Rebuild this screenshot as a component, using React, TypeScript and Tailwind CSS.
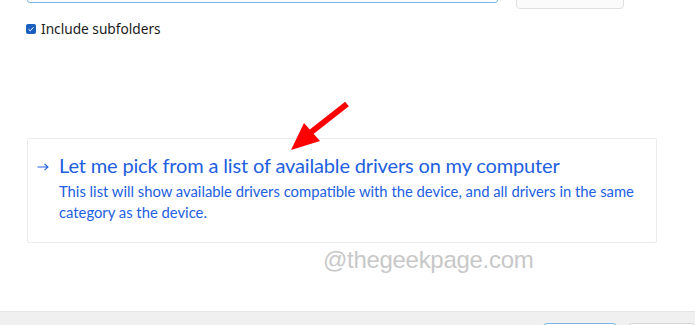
import React from "react";

export default function App() {
  const blue = "text-[#2160e0]";
  return (
    <div className="w-[695px] h-[325px] overflow-hidden bg-white flex flex-col relative font-['Noto_Sans',sans-serif]">
      {/* top row: search input and browse button, mostly scrolled off */}
      <div className="flex items-start pl-[27px] -mt-[30px]">
        <div className="w-[471px] h-[33px] border border-[#7ab5e8] rounded-[3px] bg-white" />
        <div className="ml-[18px] w-[108px] h-[39px] border border-[#e0e0e0] rounded-[4px] bg-[#fbfbfb]" />
      </div>

      {/* checkbox */}
      <label className="flex items-center gap-[5px] pl-[26px] mt-[14px] h-[12px]">
        <span className="w-[10px] h-[10px] rounded-[2px] bg-[#1a5fc0] flex items-center justify-center">
          <svg width="8" height="8" viewBox="0 0 8 8">
            <path d="M1.5 4.2 L3.2 5.8 L6.5 2.2" stroke="white" strokeWidth="1" fill="none" />
          </svg>
        </span>
        <span className="text-[13.7px] text-[#1b1b1b] leading-none">Include subfolders</span>
      </label>

      {/* card */}
      <div className="ml-[27px] mt-[103px] w-[630px] h-[105px] border border-[#ebebeb] rounded-[2px] bg-white flex font-['Lato',sans-serif]">
        <div className="pl-[9px] pt-[24px] w-[31px]">
          <svg width="12" height="8" viewBox="0 0 12 8">
            <path d="M0.5 4 H11 M7.5 0.8 L11 4 L7.5 7.2" stroke="#2160e0" strokeWidth="1.1" fill="none" />
          </svg>
        </div>
        <div className="flex flex-col">
          <div className={`mt-[13px] text-[20px] leading-[26px] tracking-[-0.15px] ${blue}`}>
            Let me pick from a list of available drivers on my computer
          </div>
          <div className={`mt-[3px] w-[590px] text-[14.8px] leading-[21px] ${blue}`}>
            This list will show available drivers compatible with the device, and all drivers in the same
            category as the device.
          </div>
        </div>
      </div>

      {/* watermark */}
      <div className="ml-[323px] mt-[3px] text-[24px] leading-[28px] text-[#c8c8c8] font-['Liberation_Sans',Arial,sans-serif] tracking-[-0.3px]">
        @thegeekpage.com
      </div>

      {/* footer */}
      <div className="mt-auto h-[14px] border-t border-[#e5e5e5] bg-[#f0f0f0] flex items-start">
        <div className="ml-[543px] mt-[11px] w-[89px] h-[24px] border border-[#7ab5e8] rounded-[4px] bg-[#fdfdfd]" />
        <div className="ml-[11px] mt-[11px] w-[80px] h-[24px] border border-[#d5d5d5] rounded-[4px] bg-[#fdfdfd]" />
      </div>

      {/* red annotation arrow */}
      <svg className="absolute left-0 top-0 pointer-events-none" width="695" height="325">
        <line x1="347" y1="104" x2="310" y2="133" stroke="#ff0000" strokeWidth="6" />
        <polygon points="291,150 304,123 320,141" fill="#ff0000" />
      </svg>
    </div>
  );
}
